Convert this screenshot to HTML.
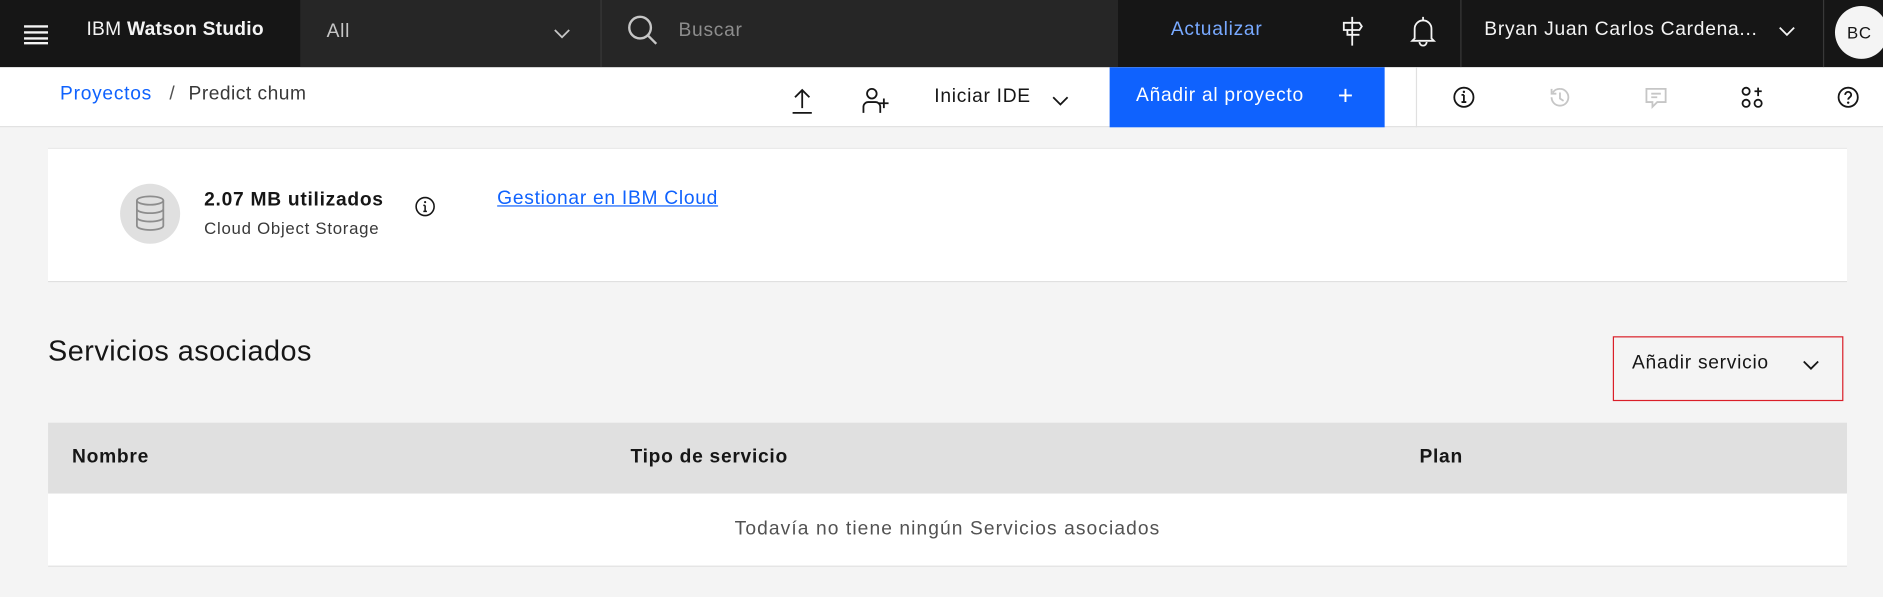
<!DOCTYPE html>
<html><head><meta charset="utf-8"><style>
*{box-sizing:border-box;margin:0;padding:0}
html,body{width:1883px;height:597px;overflow:hidden;background:#f4f4f4}
#w{width:1568px;height:497px;transform:scale(1.2009);transform-origin:0 0;position:relative;font-family:"Liberation Sans",sans-serif;color:#161616;letter-spacing:0.6px}
.a{position:absolute}
.t{white-space:nowrap}
svg{position:absolute}
</style></head><body><div id="w">
<div class="a" style="left:0;top:0;width:1568px;height:56px;background:#161616"></div>
<div class="a" style="left:250px;top:0;width:681px;height:56px;background:#262626"></div>
<div class="a" style="left:500px;top:0;width:1px;height:56px;background:#393939"></div>
<div class="a" style="left:1216px;top:0;width:1px;height:56px;background:#393939"></div>
<div class="a" style="left:1518px;top:0;width:1px;height:56px;background:#393939"></div>
<svg style="left:20px;top:18px" width="20" height="20"><path d="M0 4h20M0 9h20M0 14h20M0 18h20" stroke="#f4f4f4" stroke-width="2"/></svg>
<div class="a t" style="left:72px;top:16px;font-size:16px;color:#f4f4f4;letter-spacing:0.2px">IBM <b>Watson Studio</b></div>
<div class="a t" style="left:272px;top:18px;font-size:16px;color:#c6c6c6">All</div>
<svg style="left:460px;top:20px" width="16" height="16"><path d="M2 5l6 6 6-6" stroke="#c6c6c6" fill="none" stroke-width="1.5"/></svg>
<svg style="left:521px;top:11px" width="28" height="28"><circle cx="12" cy="12" r="9" stroke="#c6c6c6" stroke-width="2" fill="none"/><path d="M18.5 18.5l7 7" stroke="#c6c6c6" stroke-width="2"/></svg>
<div class="a t" style="left:565px;top:17px;font-size:16px;color:#8d8d8d">Buscar</div>
<div class="a t" style="left:975px;top:16px;font-size:16px;color:#78a9ff">Actualizar</div>
<svg style="left:1114px;top:12px" width="24" height="28"><path d="M12 2v24M5 7h13l2 3-2 3H5zM8 13v4h10" stroke="#f4f4f4" fill="none" stroke-width="1.5"/></svg>
<svg style="left:1173px;top:12px" width="24" height="28"><path d="M5 20V12a7 7 0 0114 0v8l2 2H3zM9 23a3 3 0 006 0M12 2v3" stroke="#f4f4f4" fill="none" stroke-width="1.5"/></svg>
<div class="a t" style="left:1236px;top:16px;font-size:16px;color:#f4f4f4">Bryan Juan Carlos Cardena...</div>
<svg style="left:1480px;top:18px" width="16" height="16"><path d="M2 5l6 6 6-6" stroke="#f4f4f4" fill="none" stroke-width="1.5"/></svg>
<div class="a" style="left:1528px;top:5px;width:44px;height:44px;border-radius:50%;background:#f4f4f4;font-size:14px;line-height:44px;text-indent:10px;color:#161616">BC</div>

<div class="a" style="left:0;top:56px;width:1568px;height:50px;background:#fff;border-bottom:1px solid #e0e0e0"></div>
<div class="a t" style="left:50px;top:70px;font-size:16px;color:#0f62fe">Proyectos</div>
<div class="a t" style="left:141px;top:70px;font-size:16px;color:#525252">/</div>
<div class="a t" style="left:157px;top:70px;font-size:16px;color:#393939;letter-spacing:0.4px">Predict chum</div>
<svg style="left:658px;top:72px" width="20" height="24"><path d="M10 18V3M4 9l6-6 6 6M2 22h16" stroke="#161616" fill="none" stroke-width="1.5"/></svg>
<svg style="left:718px;top:72px" width="22" height="24"><circle cx="8" cy="6" r="4" stroke="#161616" fill="none" stroke-width="1.5"/><path d="M1 22v-5a4 4 0 014-4h6a4 4 0 014 4v5M18 10v8M14 14h8" stroke="#161616" fill="none" stroke-width="1.5"/></svg>
<div class="a t" style="left:778px;top:72px;font-size:16px;color:#161616">Iniciar IDE</div>
<svg style="left:875px;top:76px" width="16" height="16"><path d="M2 5l6 6 6-6" stroke="#161616" fill="none" stroke-width="1.5"/></svg>
<div class="a" style="left:924px;top:56px;width:229px;height:50px;background:#0f62fe"></div>
<div class="a t" style="left:946px;top:71px;font-size:16px;color:#fff">Añadir al proyecto</div>
<div class="a t" style="left:1114px;top:67px;font-size:22px;color:#fff">+</div>
<div class="a" style="left:1179px;top:56px;width:1px;height:50px;background:#e0e0e0"></div>
<svg style="left:1209px;top:71px" width="20" height="20"><circle cx="10" cy="10" r="8" stroke="#161616" fill="none" stroke-width="1.5"/><path d="M10 8v6M8 14h4M8 8h2" stroke="#161616" stroke-width="1.5" fill="none"/><circle cx="10" cy="5.5" r="1" fill="#161616"/></svg>
<svg style="left:1289px;top:71px" width="20" height="20"><path d="M3 10a7 7 0 107-7 7 7 0 00-6 3M3 3v4h4M10 6v5l3 2" stroke="#c6c6c6" fill="none" stroke-width="1.5"/></svg>
<svg style="left:1369px;top:71px" width="20" height="20"><path d="M2 3h16v11h-7l-4 4v-4H2z M6 7h8M6 10h5" stroke="#c6c6c6" fill="none" stroke-width="1.5"/></svg>
<svg style="left:1449px;top:71px" width="20" height="20"><circle cx="5" cy="5" r="3" stroke="#161616" fill="none" stroke-width="1.5"/><circle cx="5" cy="15" r="3" stroke="#161616" fill="none" stroke-width="1.5"/><circle cx="15" cy="15" r="3" stroke="#161616" fill="none" stroke-width="1.5"/><path d="M15 2v7M12 5h6" stroke="#161616" stroke-width="1.5"/></svg>
<svg style="left:1529px;top:71px" width="20" height="20"><circle cx="10" cy="10" r="8" stroke="#161616" fill="none" stroke-width="1.5"/><path d="M7.5 8a2.5 2.5 0 115 0c0 2-2.5 2-2.5 4" stroke="#161616" fill="none" stroke-width="1.5"/><circle cx="10" cy="14.5" r="1" fill="#161616"/></svg>

<div class="a" style="left:40px;top:123px;width:1498px;height:112px;background:#fff;border-bottom:1px solid #e0e0e0;border-top:1px solid #e8e8e8"></div>
<div class="a" style="left:100px;top:153px;width:50px;height:50px;border-radius:50%;background:#e0e0e0"></div>
<svg style="left:111px;top:162px" width="28" height="32"><ellipse cx="14" cy="5" rx="11" ry="3.5" stroke="#8d8d8d" fill="none" stroke-width="1.5"/><path d="M3 5v21c0 2 5 3.5 11 3.5s11-1.5 11-3.5V5M3 12c0 2 5 3.5 11 3.5s11-1.5 11-3.5M3 19c0 2 5 3.5 11 3.5s11-1.5 11-3.5" stroke="#8d8d8d" fill="none" stroke-width="1.5"/></svg>
<div class="a t" style="left:170px;top:158px;font-size:16px;font-weight:bold">2.07 MB utilizados</div>
<div class="a t" style="left:170px;top:182px;font-size:14px;color:#393939">Cloud Object Storage</div>
<svg style="left:345px;top:163px" width="18" height="18"><circle cx="9" cy="9" r="7.5" stroke="#161616" fill="none" stroke-width="1.3"/><path d="M9 8v5M7.5 13h3M7.5 8h1.5" stroke="#161616" stroke-width="1.3" fill="none"/><circle cx="9" cy="5.3" r=".9" fill="#161616"/></svg>
<div class="a t" style="left:414px;top:157px;font-size:16px;color:#0f62fe;text-decoration:underline">Gestionar en IBM Cloud</div>

<div class="a t" style="left:40px;top:279px;font-size:24px;color:#161616;letter-spacing:0.4px">Servicios asociados</div>
<div class="a" style="left:1343px;top:280px;width:192px;height:54px;border:1px solid #da1e28"></div>
<div class="a t" style="left:1359px;top:294px;font-size:16px;color:#161616">Añadir servicio</div>
<svg style="left:1500px;top:296px" width="16" height="16"><path d="M2 5l6 6 6-6" stroke="#161616" fill="none" stroke-width="1.5"/></svg>

<div class="a" style="left:40px;top:352px;width:1498px;height:59px;background:#e0e0e0"></div>
<div class="a t" style="left:60px;top:372px;font-size:16px;font-weight:bold">Nombre</div>
<div class="a t" style="left:525px;top:372px;font-size:16px;font-weight:bold">Tipo de servicio</div>
<div class="a t" style="left:1182px;top:372px;font-size:16px;font-weight:bold">Plan</div>
<div class="a" style="left:40px;top:411px;width:1498px;height:61px;background:#fff;border-bottom:1px solid #e0e0e0"></div>
<div class="a t" style="left:40px;top:432px;width:1498px;text-align:center;font-size:16px;color:#525252;letter-spacing:0.9px">Todavía no tiene ningún Servicios asociados</div>
</div></body></html>
